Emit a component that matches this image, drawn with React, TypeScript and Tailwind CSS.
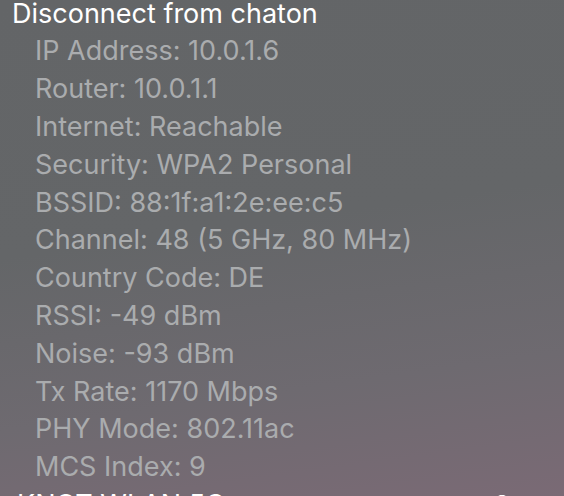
const details = [
  'IP Address: 10.0.1.6',
  'Router: 10.0.1.1',
  'Internet: Reachable',
  'Security: WPA2 Personal',
  'BSSID: 88:1f:a1:2e:ee:c5',
  'Channel: 48 (5 GHz, 80 MHz)',
  'Country Code: DE',
  'RSSI: -49 dBm',
  'Noise: -93 dBm',
  'Tx Rate: 1170 Mbps',
  'PHY Mode: 802.11ac',
  'MCS Index: 9',
];

export default function App() {
  return (
    <div
      className="w-[564px] h-[496px] overflow-hidden bg-[linear-gradient(172deg,#636567_0%,#646668_45%,#6e6a70_75%,#7a6a75_100%)]"
      style={{ fontFamily: 'Inter, "Liberation Sans", sans-serif' }}
    >
      <div className="flex flex-col">
        {/* Network header */}
        <div className="h-[26px] flex items-center pl-[12px] text-[27px] text-white leading-none">
          Disconnect from chaton
        </div>
        {/* Details */}
        <div className="flex flex-col pt-[6px]">
          {details.map((d) => (
            <div
              key={d}
              className="h-[37.8px] flex items-center pl-[35px] text-[27px] text-[#aaacae] leading-none"
            >
              {d}
            </div>
          ))}
        </div>
        {/* Next network row, cut off at the bottom */}
        <div className="h-[38px] flex items-center justify-between pl-[17px] pr-[6px] text-[27px] text-white leading-none">
          <span>KNOT WLAN 5G</span>
          <span className="flex gap-[22px] items-center">
            <svg width="16" height="20" viewBox="0 0 16 20" fill="none" stroke="white" strokeWidth="2.5">
              <path d="M3 9V6a5 5 0 0 1 10 0v3" />
              <rect x="1" y="9" width="14" height="10" rx="1.5" fill="white" />
            </svg>
            <svg width="26" height="20" viewBox="0 0 26 20" fill="white">
              <path d="M13 2C8 2 4 4 1 7l12 12L25 7c-3-3-7-5-12-5z" />
            </svg>
          </span>
        </div>
      </div>
    </div>
  );
}
